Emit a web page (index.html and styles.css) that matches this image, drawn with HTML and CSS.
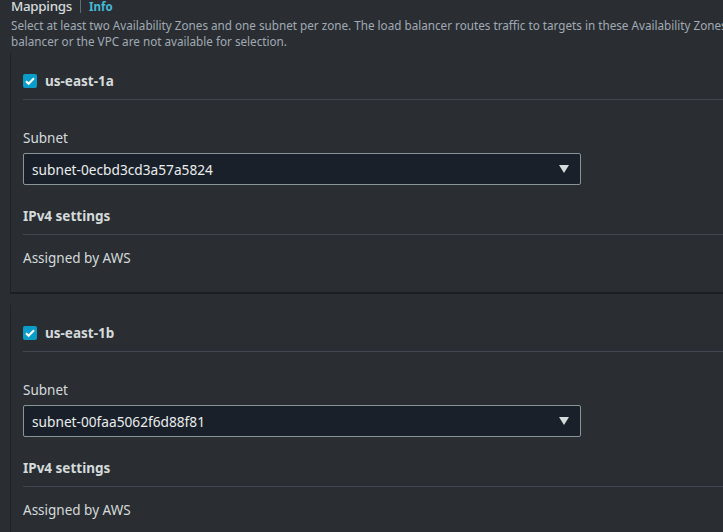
FILE: index.html
```html
<!DOCTYPE html>
<html lang="en">
<head>
    <meta charset="UTF-8">
    <meta name="viewport" content="width=device-width, initial-scale=1.0">
    <title>Mappings</title>
    <link rel="stylesheet" href="styles.css">
</head>
<body>
    <div class="page">
        <div class="section-title">
            <h2>Mappings</h2>
            <a href="#" class="info">Info</a>
        </div>
        <p class="description">Select at least two Availability Zones and one subnet per zone. The load balancer routes traffic to targets in these Availability Zones only. Availability Zones that are not supported by the load<br>balancer or the VPC are not available for selection.</p>

        <div class="zone">
            <label class="zone-header">
                <span class="checkbox">
                    <svg viewBox="0 0 14 14" width="14" height="14"><path d="M3 7.2l2.6 2.6L11 4.2" fill="none" stroke="#fff" stroke-width="2"/></svg>
                </span>
                <span class="zone-name">us-east-1a</span>
            </label>
            <div class="zone-body">
                <div class="field-label">Subnet</div>
                <div class="select">
                    <span>subnet-0ecbd3cd3a57a5824</span>
                    <svg class="caret" viewBox="0 0 10 8" width="10" height="8"><path d="M0 0h10L5 8z" fill="#d5dbdb"/></svg>
                </div>
                <div class="settings-title">IPv4 settings</div>
                <div class="settings-value">Assigned by AWS</div>
            </div>
        </div>

        <div class="zone">
            <label class="zone-header">
                <span class="checkbox">
                    <svg viewBox="0 0 14 14" width="14" height="14"><path d="M3 7.2l2.6 2.6L11 4.2" fill="none" stroke="#fff" stroke-width="2"/></svg>
                </span>
                <span class="zone-name">us-east-1b</span>
            </label>
            <div class="zone-body">
                <div class="field-label">Subnet</div>
                <div class="select">
                    <span>subnet-00faa5062f6d88f81</span>
                    <svg class="caret" viewBox="0 0 10 8" width="10" height="8"><path d="M0 0h10L5 8z" fill="#d5dbdb"/></svg>
                </div>
                <div class="settings-title">IPv4 settings</div>
                <div class="settings-value">Assigned by AWS</div>
            </div>
        </div>
    </div>
</body>
</html>
```

FILE: styles.css
```css
body {
    margin: 0;
    background: #2a2e33;
    font-family: "Noto Sans", sans-serif;
    color: #d5dbdb;
    overflow: hidden;
}
.page {
    width: 1100px;
    padding-left: 10px;
}
.section-title {
    display: flex;
    align-items: center;
    margin-top: -4px;
    padding-left: 1px;
    height: 20px;
}
.section-title h2 {
    margin: 0;
    font-size: 13.4px;
    font-weight: 500;
    letter-spacing: -0.3px;
    color: #d5dbdb;
    padding-right: 8px;
    border-right: 1px solid #5f6b7a;
    line-height: 14px;
}
.info {
    margin-left: 8px;
    font-size: 11.5px;
    font-weight: 700;
    color: #44b9d6;
    text-decoration: none;
}
.description {
    margin: 0;
    padding: 1px 0 0 1px;
    font-size: 11.7px;
    line-height: 16px;
    color: #a1aab3;
    white-space: nowrap;
}
.zone {
    margin-top: 4px;
    margin-bottom: 11px;
    padding-left: 12px;
    border-left: 1px solid #1f2226;
    border-bottom: 2px solid #1b1e22;
}
.zone-header {
    display: flex;
    align-items: center;
    gap: 8px;
    height: 18px;
    padding: 19px 0 9px;
    border-bottom: 1px solid #414750;
}
.checkbox {
    width: 14px;
    height: 14px;
    border-radius: 2px;
    background: #0a9dc9;
    display: flex;
}
.zone-name {
    font-size: 13.5px;
    font-weight: 700;
    color: #d5dbdb;
}
.zone-body {
    padding-top: 28px;
}
.field-label {
    font-size: 13.5px;
    line-height: 20px;
    color: #d5dbdb;
}
.select {
    margin-top: 5px;
    width: 537px;
    height: 30px;
    display: flex;
    align-items: center;
    justify-content: space-between;
    padding: 0 11px 0 8px;
    background: #1a2029;
    border: 1px solid #879596;
    border-radius: 2px;
    font-size: 13.7px;
    color: #eaeded;
}
.settings-title {
    margin-top: 21px;
    padding-bottom: 8px;
    font-size: 13.5px;
    line-height: 20px;
    font-weight: 700;
    border-bottom: 1px solid #414750;
}
.settings-value {
    padding: 13px 0 24px;
    font-size: 13.5px;
    line-height: 20px;
    color: #d5dbdb;
}
```
